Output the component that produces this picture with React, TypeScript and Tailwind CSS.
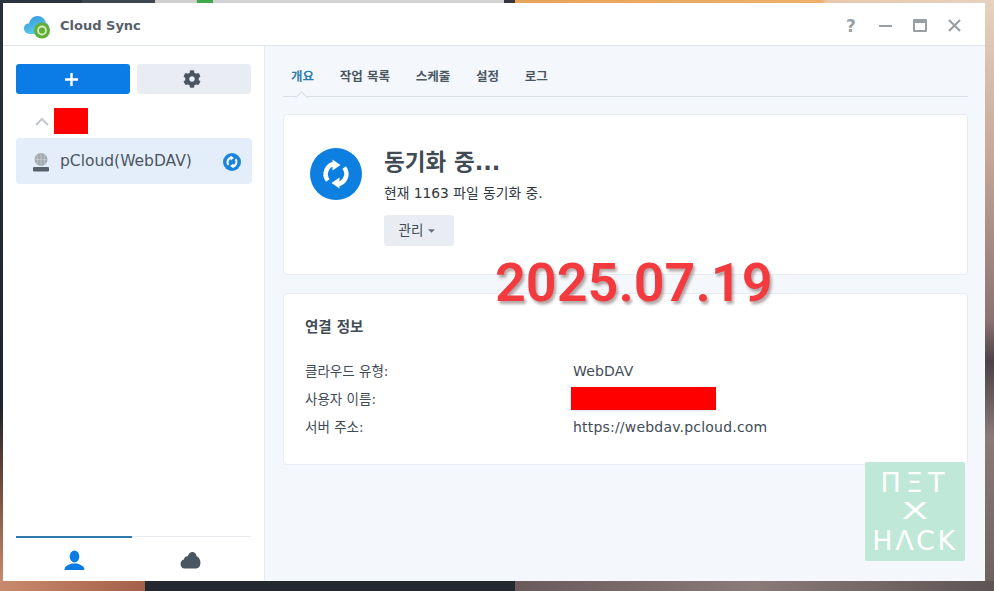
import { FaCog, FaCaretDown } from "react-icons/fa";

const tabs = ["개요", "작업 목록", "스케줄", "설정", "로그"];

function SyncArrows({ size }: { size: number }) {
  return (
    <svg width={size} height={size} viewBox="0 0 32 32" fill="none">
      <path d="M15 5.700A10.500 10.500 0 0 0 7.800 22.500" stroke="white" strokeWidth="4.500" />
      <path d="M17 26.300A10.500 10.500 0 0 0 24.200 9.500" stroke="white" strokeWidth="4.500" />
      <path d="M12.500 1.500L20.500 7L12.500 12.500Z" fill="white" />
      <path d="M19.500 19.500L11.500 25L19.500 30.500Z" fill="white" />
    </svg>
  );
}

function Logo() {
  return (
    <svg width="30" height="26" viewBox="0 0 30 26">
      <defs>
        <linearGradient id="cloud" x1="0" y1="0" x2="0.6" y2="1">
          <stop offset="0" stopColor="#2f8fdc" />
          <stop offset="1" stopColor="#5fd3ea" />
        </linearGradient>
      </defs>
      <path
        d="M7 21C3 21 1 18 1 15.500C1 12.500 3 10.500 6 10.500C7 6 10.500 3 14.500 3C19 3 22 6 23 10C25.500 10.500 26 13 26 15C26 19 23 21 20 21Z"
        fill="url(#cloud)"
      />
      <circle cx="19" cy="17.500" r="8" fill="#5fae3c" />
      <circle cx="19" cy="17.500" r="4" fill="none" stroke="#d8ecb8" strokeWidth="1.800" />
    </svg>
  );
}

function UserIcon() {
  return (
    <svg width="21" height="21" viewBox="0 0 21 21" fill="#0b7ce6">
      <ellipse cx="10.500" cy="6.500" rx="4.800" ry="6" />
      <path d="M0.500 20C0.500 16 4 15 8 13.500H13C17 15 20.500 16 20.500 20Z" />
    </svg>
  );
}

function CloudIcon() {
  return (
    <svg width="21" height="18" viewBox="0 0 22 19" fill="#4b5663">
      <path d="M5 18.500C2 18.500 0.500 16.500 0.500 13.500C0.500 11 2 9.500 4 9C4.500 6.500 6 5.500 8 5.500C9 2.500 11 1 13 1C15.500 1 17 3 17.500 5.500C20 6.500 21.500 9 21.500 12.500C21.500 16.500 19.500 18.500 17 18.500Z" />
    </svg>
  );
}

function ServerIcon() {
  return (
    <svg width="20" height="20" viewBox="0 0 20 20">
      <circle cx="10" cy="7.500" r="6.500" fill="#a3a9af" />
      <path d="M3.500 7.500H16.500M10 1V14M6 3C7 6 7 10 6 12M14 3C13 6 13 10 14 12" stroke="#c9d0d8" strokeWidth="0.700" fill="none" />
      <rect x="2" y="15" width="16" height="4.500" rx="1" fill="#58626d" />
    </svg>
  );
}

function InfoRow({ label, children }: { label: string; children: React.ReactNode }) {
  return (
    <div className="flex h-7 items-center">
      <div className="w-[268px] text-[13.500px] text-[#414b55]">{label}</div>
      <div className="text-[14px] tracking-[0.2px] text-[#414b55]">{children}</div>
    </div>
  );
}

export default function App() {
  return (
    <div className="relative flex h-[591px] w-[994px] flex-col overflow-hidden font-['DejaVu_Sans','Noto_Sans_CJK_KR',sans-serif]">
      <div className="flex h-[3px] shrink-0">
        <div className="w-[82px] bg-[#2b3440]" />
        <div className="w-[73px] bg-[#3d4650]" />
        <div className="w-[42px] bg-[#cfcfd0]" />
        <div className="w-[16px] bg-[#3fa84a]" />
        <div className="w-[291px] bg-[#d3d3d4]" />
        <div className="w-[11px] bg-[#33363b]" />
        <div className="flex-1 bg-[linear-gradient(to_right,#e8a458,#eeb06a_64%,#e8c8ac_65%,#e6d2bf)]" />
      </div>

      <div className="flex min-h-0 flex-1">
        <div className="w-[3px] shrink-0 bg-[linear-gradient(to_bottom,#2a3038,#1f242a_70%,#7a5040_85%,#c88a6c)]" />

        <div className="flex w-[982px] shrink-0 flex-col rounded-[3px] bg-white">
          <header className="flex h-[43px] shrink-0 items-center border-b border-[#dfe5ec] pt-[3px] pr-[24px] pl-[20px]">
            <Logo />
            <span className="ml-[7px] text-[13px] font-bold text-[#57606a]">Cloud Sync</span>
            <div className="ml-auto flex items-center gap-[21px] text-[#9a9fa6]">
              <span className="w-[14px] text-center text-[17px] leading-[20px] font-bold">?</span>
              <span className="h-[2px] w-[13px] bg-[#9a9fa6]" />
              <span className="h-[13px] w-[14px] rounded-[1px] border-[2px] border-t-[4px] border-[#9a9fa6]" />
              <svg width="13" height="13" viewBox="0 0 13 13" stroke="#9a9fa6" strokeWidth="2.200">
                <path d="M1 1L12 12M12 1L1 12" />
              </svg>
            </div>
          </header>

          <div className="flex min-h-0 flex-1">
            <aside className="flex w-[262px] shrink-0 flex-col border-r border-[#e6ebf1] pt-[18px] pl-[13px]">
              <div className="flex w-[235px] gap-[7px]">
                <button className="flex h-[30px] w-[114px] items-center justify-center rounded-[3px] bg-[#0b7ce6] pr-[4px] text-white">
                  <svg width="15" height="15" viewBox="0 0 15 15" stroke="white" strokeWidth="2.400">
                    <path d="M7.500 1V14M1 7.500H14" />
                  </svg>
                </button>
                <button className="flex h-[30px] w-[114px] items-center justify-center rounded-[3px] bg-[#e9edf3] pr-[4px] text-[#4b5663]">
                  <FaCog className="text-[18px]" />
                </button>
              </div>

              <div className="mt-[14px] flex h-[26px] items-center pl-[19px]">
                <svg width="14" height="9" viewBox="0 0 14 9" fill="none" stroke="#c2c6cb" strokeWidth="2">
                  <path d="M1 8L7 2L13 8" />
                </svg>
                <div className="ml-[5px] h-[26px] w-[34px] bg-[#ff0000]" />
              </div>

              <div className="mt-[4px] flex h-[46px] w-[236px] items-center rounded-[4px] bg-[#e4eefa] pt-[2px] pr-[11px] pl-[15px]">
                <ServerIcon />
                <span className="ml-[9px] text-[15.500px] text-[#4b5663]">pCloud(WebDAV)</span>
                <div className="ml-auto flex size-[18px] items-center justify-center rounded-full bg-[#1a85dc]">
                  <SyncArrows size={14} />
                </div>
              </div>

              <div className="flex-1" />

              <div className="flex h-[45px] w-[235px] border-t border-[#e8ecf1]">
                <div className="-mt-px flex w-[116px] items-center justify-center border-t-2 border-[#2f78ad] pt-[2px]">
                  <UserIcon />
                </div>
                <div className="flex flex-1 items-center justify-center pt-[2px] pr-[2px]">
                  <CloudIcon />
                </div>
              </div>
            </aside>

            <main className="min-w-0 flex-1 bg-[#f4f7fb] pt-[14px] pr-[17px] pl-[18px]">
              <nav className="relative flex h-[37px] items-center gap-[25.700px] border-b border-[#d9dfe6] pb-[2px] pl-[8px] text-[12.500px] font-bold text-[#4b5663]">
                {tabs.map((tab, i) => (
                  <span key={tab} className={i === 0 ? "text-[#2f7fae]" : ""}>
                    {tab}
                  </span>
                ))}
                <span className="absolute -bottom-px left-[14px] size-[9px] translate-y-[5px] rotate-45 border-t border-l border-[#d9dfe6] bg-[#f4f7fb]" />
              </nav>

              <section className="mt-[17px] flex h-[161px] rounded-[4px] border border-[#e8ecf2] bg-white pt-[33px] pl-[26px]">
                <div className="flex size-[52px] items-center justify-center rounded-full bg-[#0d7fe0]">
                  <SyncArrows size={32} />
                </div>
                <div className="ml-[22px]">
                  <h1 className="-mt-px text-[22.500px] leading-[30px] font-bold text-[#414b55]">동기화 중...</h1>
                  <p className="mt-[6px] text-[13.800px] leading-[20px] text-[#2f363d]">현재 1163 파일 동기화 중.</p>
                  <button className="mt-[12px] flex h-[31px] w-[70px] items-center justify-center gap-[3px] rounded-[3px] bg-[#e9edf3] pr-[2px] text-[13.500px] text-[#414b55]">
                    관리
                    <FaCaretDown className="text-[11px] text-[#6b7480]" />
                  </button>
                </div>
              </section>

              <section className="mt-[18px] h-[172px] rounded-[4px] border border-[#e8ecf2] bg-white pt-[23px] pl-[21px]">
                <h2 className="text-[14.500px] leading-[20px] font-bold text-[#414b55]">연결 정보</h2>
                <div className="mt-[20px]">
                  <InfoRow label="클라우드 유형:">WebDAV</InfoRow>
                  <InfoRow label="사용자 이름:">
                    <div className="-ml-[2px] h-[23px] w-[145px] -translate-y-px bg-[#ff0000] shadow-sm" />
                  </InfoRow>
                  <InfoRow label="서버 주소:">https://webdav.pcloud.com</InfoRow>
                </div>
              </section>
            </main>
          </div>
        </div>

        <div className="flex-1 bg-[linear-gradient(to_bottom,#e6d2bf,#c8aa98_25%,#8a7272_55%,#4c4248_62%,#8a7a78_75%,#6e6260_100%)]" />
      </div>

      <div className="flex h-[10px] shrink-0">
        <div className="w-[145px] bg-[linear-gradient(to_right,#c88a6c,#a4604a)]" />
        <div className="w-[370px] bg-[#23292e]" />
        <div className="flex-1 bg-[linear-gradient(to_right,#6a5a5c,#8a7a78_50%,#5e5454)]" />
      </div>

      <div className="absolute top-[251px] left-[495px] text-[54px] leading-[64px] font-semibold text-[#f23a3f] [font-family:'Roboto',sans-serif] [text-shadow:2px_3px_3px_rgba(90,60,60,0.45)]">
        2025.07.19
      </div>

      <div className="absolute top-[462px] left-[865px] flex h-[99px] w-[100px] flex-col items-center justify-center rounded-[2px] bg-[#bfe8d8] font-['DejaVu_Sans',sans-serif] text-white">
        <span className="text-[27px] leading-[29px] tracking-[5px]">ΠΞT</span>
        <span className="scale-x-[1.7] text-[23px] leading-[29px]">X</span>
        <span className="text-[27px] leading-[29px] tracking-[2.500px]">HΛCK</span>
      </div>
    </div>
  );
}
